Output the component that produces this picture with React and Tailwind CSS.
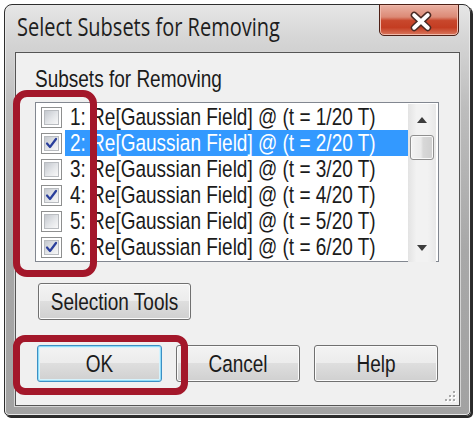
import React from "react";

function T({ children, className = "" }) {
  return <span className={"inline-block scale-y-125 " + className}>{children}</span>;
}

function Check({ checked }) {
  return (
    <div className="w-[21px] h-[21px] border border-[#8e8f8f] bg-white p-[2px] flex shrink-0">
      <div className="flex-1 border border-[#b9bcc0] bg-[linear-gradient(135deg,#c4c8ce_0%,#e4e6e9_55%,#f8f8f8_100%)] flex items-center justify-center">
        {checked && (
          <svg width="13" height="13" viewBox="0 0 13 13">
            <path d="M2 6.5 L5 10 L11 2" fill="none" stroke="#2a3f9c" strokeWidth="2.2" strokeLinejoin="round" strokeLinecap="round" />
          </svg>
        )}
      </div>
    </div>
  );
}

function Btn({ children, className = "", def = false }) {
  return (
    <div
      className={
        "h-[37px] rounded-[3px] border flex items-center justify-center text-[19px] leading-[20px] text-[#1b1b1b] bg-[linear-gradient(to_bottom,#f3f3f3_0%,#ececec_48%,#dedede_50%,#d0d0d0_100%)] " +
        (def
          ? "border-[#3c8fc4] shadow-[inset_0_0_0_1px_#8fdcf8,inset_0_0_0_2px_#d6f3fd] "
          : "border-[#707070] shadow-[inset_0_0_0_1px_#fbfbfb] ") +
        className
      }
    >
      <T>{children}</T>
    </div>
  );
}

const rows = [
  { n: 1, c: false },
  { n: 2, c: true, sel: true },
  { n: 3, c: false },
  { n: 4, c: true },
  { n: 5, c: false },
  { n: 6, c: true },
];

export default function App() {
  return (
    <div className="w-[476px] h-[422px] bg-white relative overflow-hidden pt-[4px] pl-[4px] font-['Liberation_Sans',Arial,sans-serif]">
      <div className="w-[467px] h-[412px] rounded-t-[8px] rounded-b-[5px] border border-[#2e2e2e] bg-[linear-gradient(to_bottom,#e6e6e6_0%,#d6d6d6_8%,#bdbdbd_25%,#a8a8a8_60%,#a2a2a2_100%)] shadow-[inset_0_0_0_1px_#e8e8e8,2px_2px_0_#2a2a2a] flex flex-col">
        {/* title bar */}
        <div className="h-[47px] flex items-start shrink-0">
          <div className="pl-[12px] pt-[12px] text-[20px] leading-[20px] text-[#1e1e1e] font-['Open_Sans','Noto_Sans',sans-serif]">
            <T>Select Subsets for Removing</T>
          </div>
          <div className="ml-auto mr-[11px] -mt-[1px] w-[80px] h-[32px] rounded-b-[5px] border border-[#4e2016] bg-[linear-gradient(to_bottom,#eab1a3_0%,#dc8a76_40%,#c8472c_52%,#c43d22_75%,#d9785e_100%)] shadow-[inset_0_0_0_1px_#f0b9aa] flex items-center justify-center">
            <svg width="80" height="32" viewBox="0 0 80 32">
              <path d="M35 11 L49 24 M49 11 L35 24" stroke="#4a2a24" strokeWidth="7" strokeLinecap="round" />
              <path d="M35 11 L49 24 M49 11 L35 24" stroke="#ffffff" strokeWidth="4" strokeLinecap="round" />
            </svg>
          </div>
        </div>
        {/* client */}
        <div className="ml-[10px] mr-[10px] mb-[9px] flex-1 border border-[#555555] shadow-[0_0_0_1px_#d4d4d4] bg-[#f0f0f0] flex flex-col relative">
          <div className="h-[49px] pl-[19px] pt-[16px] text-[19px] leading-[20px] text-[#1b1b1b]">
            <T>Subsets for Removing</T>
          </div>
          <div className="ml-[19px] w-[404px] h-[160px] border border-[#828790] bg-white flex pt-[1px] pr-[2px]">
            <div className="flex-1 flex flex-col">
              {rows.map((r) => (
                <div key={r.n} className="h-[26px] flex items-center pl-[5px]">
                  <Check checked={r.c} />
                  <div
                    className={
                      "ml-[3px] h-[26px] flex-1 flex items-center pl-[5px] text-[19px] leading-[20px] " +
                      (r.sel ? "bg-[#3399ff] text-white" : "text-[#1b1b1b]")
                    }
                  >
                    <T>{`${r.n}: Re[Gaussian Field] @ (t = ${r.n}/20 T)`}</T>
                  </div>
                </div>
              ))}
            </div>
            {/* scrollbar */}
            <div className="w-[28px] h-[158px] bg-[linear-gradient(to_right,#e3e3e3_0%,#f2f2f2_30%,#f2f2f2_70%,#e8e8e8_100%)] flex flex-col items-center">
              <div className="h-[31px] w-full flex items-center justify-center">
                <svg width="10" height="6" viewBox="0 0 10 6">
                  <path d="M0 6 L5 0 L10 6 Z" fill="#3d3d3d" />
                </svg>
              </div>
              <div className="w-[24px] h-[25px] rounded-[3px] border border-[#8f8f8f] bg-[linear-gradient(to_right,#f3f3f3_0%,#eaeaea_45%,#d8d8d8_55%,#cfcfcf_100%)] shadow-[inset_0_0_0_1px_#fafafa]" />
              <div className="flex-1" />
              <div className="h-[28px] w-full flex items-center justify-center">
                <svg width="10" height="6" viewBox="0 0 10 6">
                  <path d="M0 0 L5 6 L10 0 Z" fill="#3d3d3d" />
                </svg>
              </div>
            </div>
          </div>
          <Btn className="ml-[22px] mt-[21px] w-[153px]">Selection Tools</Btn>
          <div className="ml-[21px] mt-[25px] flex gap-[14px]">
            <Btn def className="w-[125px]">OK</Btn>
            <Btn className="w-[124px]">Cancel</Btn>
            <Btn className="w-[124px]">Help</Btn>
          </div>
          {/* resize grip */}
          <svg className="absolute right-[2px] bottom-[2px]" width="14" height="14" viewBox="0 0 14 14">
            {[
              [11, 3],
              [7, 7],
              [11, 7],
              [3, 11],
              [7, 11],
              [11, 11],
            ].map(([x, y], i) => (
              <g key={i}>
                <rect x={x} y={y} width="2" height="2" fill="#ffffff" />
                <rect x={x - 1} y={y - 1} width="2" height="2" fill="#a8a8a8" />
              </g>
            ))}
          </svg>
        </div>
      </div>
      {/* annotation boxes */}
      <div className="absolute left-[13px] top-[90px] w-[84px] h-[187px] border-[7px] border-[#a3172a] rounded-[14px]" />
      <div className="absolute left-[13px] top-[335px] w-[175px] h-[60px] border-[7px] border-[#a3172a] rounded-[12px]" />
    </div>
  );
}
